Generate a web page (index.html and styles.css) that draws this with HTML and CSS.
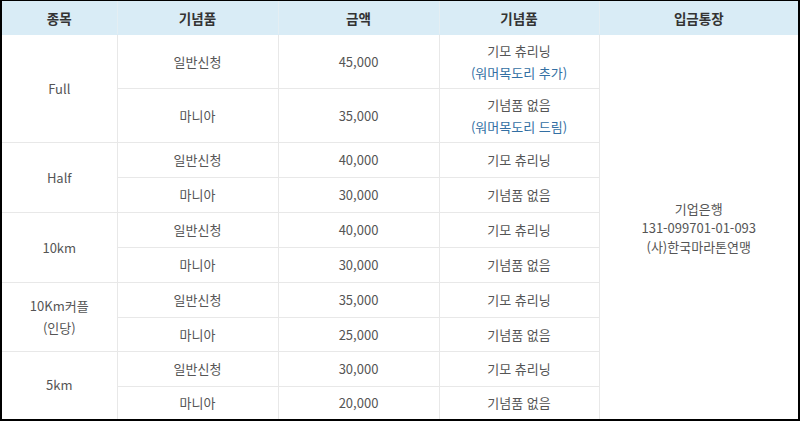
FILE: index.html
```html
<!DOCTYPE html>
<html lang="ko">
<head>
<meta charset="utf-8">
<link rel="stylesheet" href="styles.css">
</head>
<body>
<div class="frame">
<table class="fee">
  <colgroup>
    <col class="c1"><col class="c2"><col class="c3"><col class="c4"><col class="c5">
  </colgroup>
  <thead>
    <tr class="hd"><th>종목</th><th>기념품</th><th>금액</th><th>기념품</th><th>입금통장</th></tr>
  </thead>
  <tbody>
    <tr class="r54"><td rowspan="2">Full</td><td>일반신청</td><td>45,000</td><td>기모 츄리닝<br><span class="blue">(워머목도리 추가)</span></td>
      <td rowspan="10" class="bank">기업은행<br>131-099701-01-093<br>(사)한국마라톤연맹</td></tr>
    <tr class="r54"><td>마니아</td><td>35,000</td><td>기념품 없음<br><span class="blue">(워머목도리 드림)</span></td></tr>
    <tr class="r35"><td rowspan="2">Half</td><td>일반신청</td><td>40,000</td><td>기모 츄리닝</td></tr>
    <tr class="r35"><td>마니아</td><td>30,000</td><td>기념품 없음</td></tr>
    <tr class="r35"><td rowspan="2">10km</td><td>일반신청</td><td>40,000</td><td>기모 츄리닝</td></tr>
    <tr class="r35"><td>마니아</td><td>30,000</td><td>기념품 없음</td></tr>
    <tr class="r35"><td rowspan="2">10Km커플<br>(인당)</td><td>일반신청</td><td>35,000</td><td>기모 츄리닝</td></tr>
    <tr class="r34"><td>마니아</td><td>25,000</td><td>기념품 없음</td></tr>
    <tr class="r35"><td rowspan="2">5km</td><td>일반신청</td><td>30,000</td><td>기모 츄리닝</td></tr>
    <tr class="r33"><td>마니아</td><td>20,000</td><td>기념품 없음</td></tr>
  </tbody>
</table>
</div>
</body>
</html>
```
FILE: styles.css
```css
html, body {
  margin: 0;
  padding: 0;
  background: #fff;
}
.frame {
  width: 800px;
  height: 421px;
  box-sizing: border-box;
  border-top: 1px solid #000;
  border-left: 2px solid #000;
  border-right: 2px solid #000;
  border-bottom: 2px solid #000;
  overflow: hidden;
}
.fee {
  width: 796px;
  border-collapse: collapse;
  table-layout: fixed;
  font-family: "Noto Sans CJK KR", "Noto Sans", sans-serif;
  font-size: 13px;
  color: #555;
}
.c1 { width: 115px; }
.c2 { width: 161px; }
.c3 { width: 161px; }
.c4 { width: 160px; }
.c5 { width: 199px; }
.fee th, .fee td {
  border: 1px solid #e8e8e8;
  text-align: center;
  vertical-align: middle;
  padding: 0;
  line-height: 22px;
}
.fee tr > :first-child { border-left: none; }
.fee tr > :last-child { border-right: none; }
.fee thead th {
  border-top: none;
  background: #d9ecf6;
  color: #333;
  font-weight: bold;
  font-size: 13.5px;
  height: 33px;
  border-color: #d9ecf6 #e4eef3;
}
.fee tbody tr:last-child td { border-bottom: none; }
.fee td.bank { border-bottom: none; line-height: 19px; }
.r54 td { height: 53px; }
.r35 td { height: 34px; }
.r34 td { height: 33px; }
.r33 td { height: 32px; }
.blue { color: #336fa3; }
```
